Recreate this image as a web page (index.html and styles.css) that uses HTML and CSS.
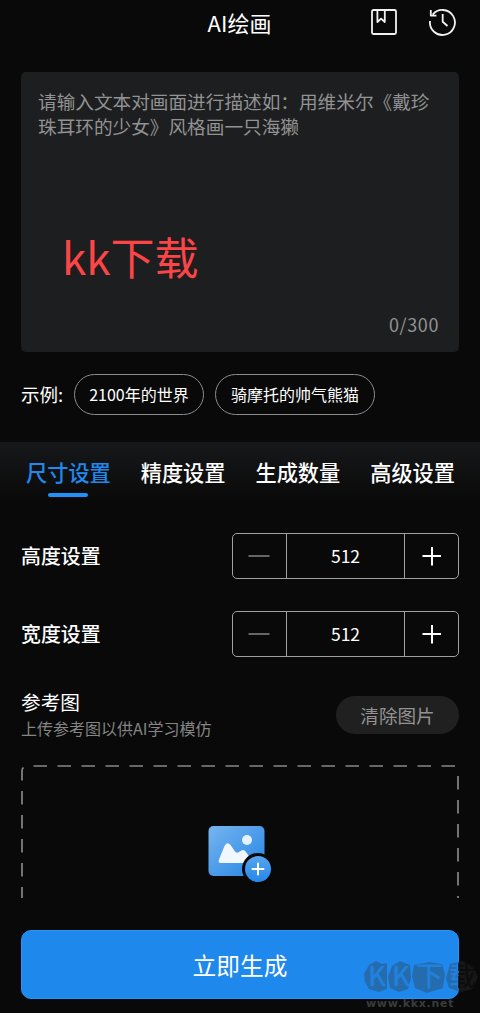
FILE: index.html
```html
<!DOCTYPE html>
<html lang="zh-CN">
<head>
<meta charset="utf-8">
<title>AI绘画</title>
<link rel="stylesheet" href="styles.css">
</head>
<body>
<div class="app">
  <header class="topbar">
    <h1 class="title">AI绘画</h1>
    <div class="actions">
      <svg class="icon" width="28" height="30" viewBox="0 0 28 30"><rect x="2" y="3" width="24" height="24" rx="1.5"/><path d="M7.400 3v12l3.700-3.300 3.700 3.300V3"/></svg>
      <svg class="icon" width="30" height="30" viewBox="0 0 30 30"><path d="M4.700 7.600A12.500 12.500 0 1 1 2 14M2.800 3v5.600h5.600M14.700 7v7.800l4.800 4.200"/></svg>
    </div>
  </header>

  <section class="prompt">
    <p class="placeholder">请输入文本对画面进行描述如：用维米尔《戴珍珠耳环的少女》风格画一只海獭</p>
    <div class="mark">kk下载</div>
    <div class="counter">0/300</div>
  </section>

  <section class="examples">
    <span class="examples-label">示例:</span>
    <span class="chip chip-a">2100年的世界</span>
    <span class="chip chip-b">骑摩托的帅气熊猫</span>
  </section>

  <nav class="tabs">
    <span class="tab active">尺寸设置</span>
    <span class="tab">精度设置</span>
    <span class="tab">生成数量</span>
    <span class="tab">高级设置</span>
  </nav>

  <section class="setting">
    <span class="setting-name">高度设置</span>
    <div class="stepper">
      <svg class="minus" viewBox="0 0 53 44"><path d="M15.500 22h21"/></svg>
      <span class="value">512</span>
      <svg class="plus" viewBox="0 0 53 44"><path d="M17.500 22h18.500M27 13v18.500"/></svg>
    </div>
  </section>
  <section class="setting">
    <span class="setting-name">宽度设置</span>
    <div class="stepper">
      <svg class="minus" viewBox="0 0 53 44"><path d="M15.500 22h21"/></svg>
      <span class="value">512</span>
      <svg class="plus" viewBox="0 0 53 44"><path d="M17.500 22h18.500M27 13v18.500"/></svg>
    </div>
  </section>

  <section class="reference">
    <div>
      <div class="reference-title">参考图</div>
      <div class="reference-hint">上传参考图以供AI学习模仿</div>
    </div>
    <span class="clear">清除图片</span>
  </section>

  <section class="upload">
    <svg class="upload-art" width="438" height="134" viewBox="0 0 438 134">
      <defs>
        <linearGradient id="card" x1="0" y1="0" x2="1" y2="1"><stop offset="0" stop-color="#76b5ee"/><stop offset="1" stop-color="#2484e6"/></linearGradient>
        <linearGradient id="dot" x1="0" y1="0" x2="0" y2="1"><stop offset="0" stop-color="#56a4ef"/><stop offset="1" stop-color="#2687ea"/></linearGradient>
      </defs>
      <path class="dash" stroke-dasharray="13.500 10.500" d="M12.500 1H434"/>
      <path class="dash" d="M2.500 2.500Q1 3.500 1 6V15.500"/>
      <path class="dash" stroke-dasharray="13.500 10.500" d="M1 26V133"/>
      <path class="dash" stroke-dasharray="13.500 10.500" d="M437 11V133"/>
      <rect x="187.500" y="61" width="56" height="50" rx="5" fill="url(#card)"/>
      <circle cx="226" cy="75" r="5" fill="#e6f2fe"/>
      <path d="M200 98Q196.500 98 198 94.500L203.500 81Q206 76 209.500 80L214 86.500Q215.500 88.500 218 87L220.500 85.500Q223 84 225 87L230 94V98Z" fill="#f0f7ff"/>
      <circle cx="237" cy="104" r="16" fill="#090909"/>
      <circle cx="237" cy="104" r="13" fill="url(#dot)"/>
      <path d="M231.500 104h11M237 98.500v11" stroke="#fff" stroke-width="2" stroke-linecap="round"/>
    </svg>
  </section>

  <div class="footer">
    <div class="submit">立即生成</div>
    <div class="site">
      <svg width="117" height="33" viewBox="0 0 117 33">
        <defs>
          <linearGradient id="name" gradientUnits="userSpaceOnUse" x1="0" y1="0" x2="117" y2="0"><stop offset=".815" stop-color="#1f88ec"/><stop offset=".815" stop-color="#090909"/></linearGradient>
        </defs>
        <g class="blob">
          <path d="M6 5L13 1L19 4L24 3L24 29L16 32L6 29L2 22L1 14Z"/>
          <path d="M29 6L37 1L47 5L48 18L45 29L36 32L27 28L25 17Z"/>
          <path d="M51 5L66 2L79 4L82 14L80 28L64 33L52 28L49 16Z"/>
          <path d="M87 4L99 1L110 6L115 17L110 29L98 32L86 28L83 18Z"/>
        </g>
        <text class="site-name" y="26" x="5 29 53 86" fill="url(#name)">KK下载</text>
      </svg>
      <div class="site-url">www.kkx.net</div>
    </div>
  </div>
</div>
</body>
</html>
```
FILE: styles.css
```css
* { box-sizing: border-box; }
body {
  margin: 0;
  background: #090909;
  color: #fff;
  font-family: "Noto Sans CJK SC", sans-serif;
}
.app {
  width: 480px;
  height: 1013px;
  overflow: hidden;
  display: flex;
  flex-direction: column;
}
.topbar {
  height: 72px;
  flex: none;
  display: grid;
  grid-template-columns: 1fr auto 1fr;
  align-items: start;
  padding-right: 22px;
}
.title {
  grid-column: 2;
  margin: 6px 0 0 21px;
  font-size: 22px;
  line-height: 32px;
  font-weight: 400;
}
.actions {
  display: flex;
  justify-content: flex-end;
  gap: 30px;
  padding-top: 7px;
}
.icon { fill: none; stroke: #f2f2f2; stroke-width: 1.8; stroke-linejoin: round; }
.prompt {
  flex: none;
  height: 280px;
  margin: 0 21px;
  padding: 17px 0 13px 17px;
  border-radius: 5px;
  background: #1d1e20;
  display: flex;
  flex-direction: column;
}
.placeholder {
  margin: 0;
  width: 400px;
  font-size: 18.65px;
  line-height: 24.5px;
  color: #929292;
}
.mark {
  margin: 86px 0 0 24px;
  font-size: 44px;
  line-height: 64px;
  color: #fb4547;
}
.counter {
  margin-top: auto;
  padding-right: 20px;
  text-align: right;
  font-size: 18px;
  letter-spacing: .6px;
  line-height: 30px;
  color: #929292;
}
.examples {
  flex: none;
  height: 90px;
  padding: 22px 21px 0;
  display: flex;
  align-items: flex-start;
}
.examples-label { width: 53px; font-size: 18.5px; line-height: 41px; }
.chip {
  height: 41px;
  border: 1px solid #8c8c8c;
  border-radius: 21px;
  font-size: 16px;
  line-height: 39px;
  text-align: center;
  white-space: nowrap;
}
.chip-a { width: 130px; margin-right: 11px; }
.chip-b { width: 160px; }
.tabs {
  flex: none;
  height: 75px;
  padding: 13px 25px 0 26px;
  display: flex;
  justify-content: space-between;
  background: linear-gradient(#17181a, #090909 80%);
}
.tab {
  display: flex;
  flex-direction: column;
  align-items: center;
  height: 42px;
  font-size: 21.2px;
  line-height: 34px;
  font-weight: 500;
}
.active { color: #1e8af0; }
.active::after {
  content: "";
  width: 40px;
  height: 4px;
  margin-top: 4px;
  border-radius: 2px;
  background: #2190f8;
}
.setting {
  flex: none;
  height: 77.500px;
  padding: 16px 21px 0;
  display: flex;
  justify-content: space-between;
}
.setting-name { font-size: 19.9px; line-height: 46px; font-weight: 500; }
.stepper {
  width: 227px;
  height: 46px;
  border: 1px solid #a0a0a0;
  border-radius: 5px;
  display: grid;
  grid-template-columns: 53px 1fr 53px;
}
.value {
  border: solid #a0a0a0;
  border-width: 0 1px;
  text-align: center;
  font-size: 17.5px;
  line-height: 44px;
}
.minus, .plus { width: 53px; height: 44px; }
.minus { stroke: #666; stroke-width: 2; }
.plus { stroke: #fff; stroke-width: 2; }
.reference {
  flex: none;
  height: 93px;
  padding: 16px 21px 0;
  display: flex;
  justify-content: space-between;
}
.reference-title { font-size: 19.7px; line-height: 28px; }
.reference-hint { font-size: 16px; line-height: 25px; color: #858585; }
.clear {
  width: 123px;
  height: 38px;
  margin-top: 8px;
  border-radius: 19px;
  background: #202020;
  color: #929292;
  font-size: 18.6px;
  line-height: 37px;
  text-align: center;
}
.upload { flex: none; height: 165px; padding-left: 21px; }
.upload-art { display: block; }
.dash { fill: none; stroke: #868686; stroke-width: 1.7; }
.footer { position: relative; flex: 1; padding: 0 21px; }
.submit {
  height: 69px;
  border: 1px solid #2894fc;
  border-radius: 10px;
  background: #1f88ec;
  font-size: 23.7px;
  line-height: 68px;
  text-align: center;
}
.site { position: absolute; left: 363px; top: 30px; width: 117px; }
.site svg { display: block; overflow: visible; }
.blob { fill: #333; fill-opacity: .33; }
.site-name { font-size: 27px; font-weight: 500; fill-opacity: .75; }
.site-url {
  padding-left: 3px;
  margin-top: 3px;
  font: bold 11px/16px "DejaVu Sans", sans-serif;
  letter-spacing: .7px;
  color: #3a3b3b;
}
```
